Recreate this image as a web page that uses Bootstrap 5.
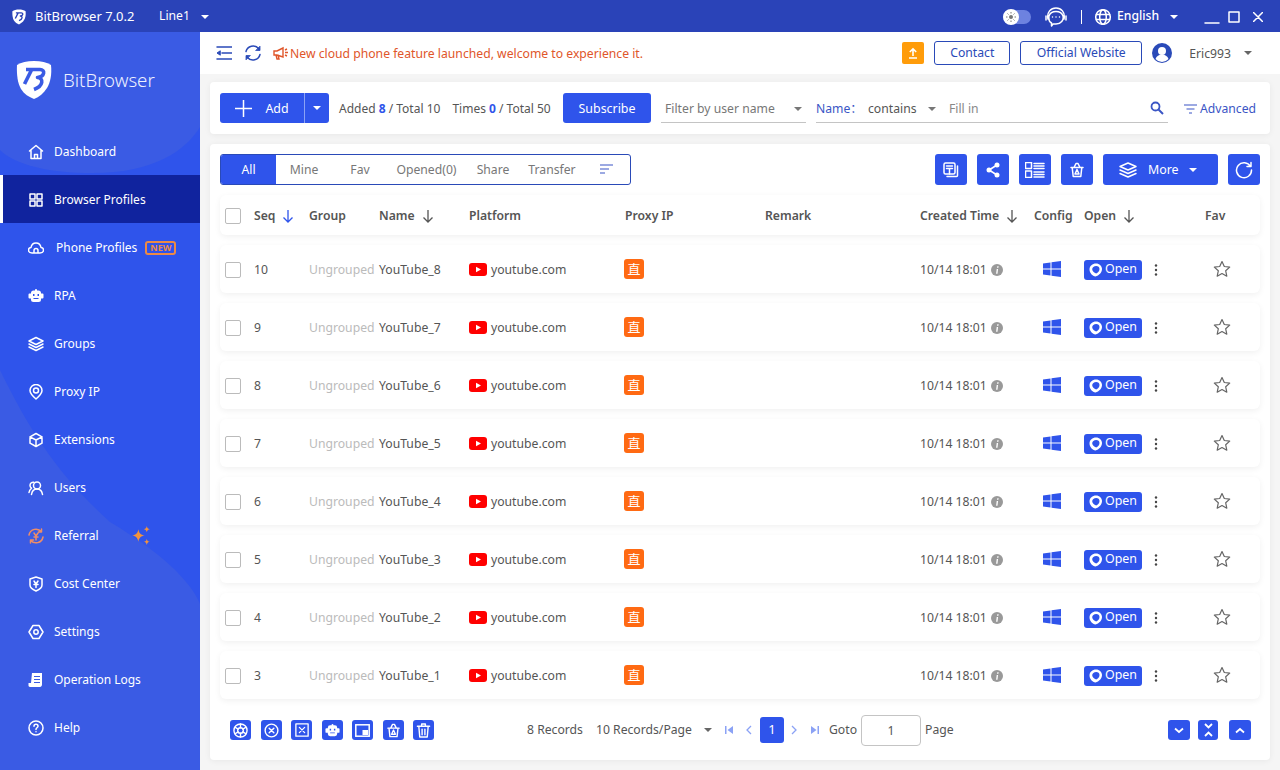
<!DOCTYPE html>
<html lang="en">
<head>
    <meta charset="UTF-8">
    <meta name="viewport" content="width=device-width, initial-scale=1.0">
    <title>BitBrowser</title>
    <link href="https://cdn.jsdelivr.net/npm/bootstrap@5.3.0/dist/css/bootstrap.min.css" rel="stylesheet">
    <style>
        html, body { height: 100%; overflow: hidden; }
        body {
            font-family: "Noto Sans", "Noto Sans CJK SC", sans-serif;
            font-size: 12.2px;
            color: #555;
            background: #f5f5f5;
        }
        svg { display: block; flex: none; }
        .ico { fill: none; stroke: currentColor; stroke-width: 1.5; stroke-linecap: round; stroke-linejoin: round; }
        .ico-fill { fill: currentColor; }
        .caret-down { width: 0; height: 0; border-left: 4px solid transparent; border-right: 4px solid transparent; border-top: 4px solid currentColor; flex: none; }
        .caret-grey { color: #666; }

        /* left margins in px that the bootstrap spacer scale does not have */
        .sp-4 { margin-left: 4px; }
        .sp-5 { margin-left: 5px; }
        .sp-7 { margin-left: 7px; }
        .sp-8 { margin-left: 8px; }
        .sp-9 { margin-left: 9px; }
        .sp-10 { margin-left: 10px; }
        .sp-11 { margin-left: 11px; }
        .sp-12 { margin-left: 12px; }
        .sp-13 { margin-left: 13px; }
        .sp-26 { margin-left: 26px; }

        .top-bar { height: 32px; background: #2a43b8; color: #fff; flex: none; padding-top: 1px; }
        .top-logo { margin-left: 12px; --cut: #2a43b8; }
        .top-title { margin-left: 9px; font-size: 13px; width: 124px; }
        .top-line { width: 42px; }
        .theme-switch { width: 28px; height: 14px; border-radius: 7px; background: #6d82e0; position: relative; }
        .theme-knob { position: absolute; left: 0; top: -1px; width: 16px; height: 16px; border-radius: 50%; background: #fff; color: #777; padding: 3px; }
        .top-sep { width: 1px; height: 14px; background: #fff; margin: 0 13px; }
        .lang-name { margin-left: 6px; width: 53px; }
        .win-close { margin-left: 13px; margin-right: 17px; }

        .side-bar { width: 200px; background: #2f54eb; color: #fff; flex: none; position: relative; overflow: hidden; }
        .side-bg { position: absolute; left: 0; top: 0; }
        .side-logo { position: relative; height: 95px; padding-left: 16px; gap: 11px; font-size: 18.6px; font-weight: 300; color: #eef1ff; --cut: #3a5be4; }
        .side-item { position: relative; height: 48px; padding: 2px 0 0 28px; gap: 10px; color: #fff; font-size: 12px; text-decoration: none; }
        .side-item svg.nav-ico { width: 16px; height: 16px; }
        .side-item.active-item { background: #10239e; box-shadow: inset 3px 0 0 #fff; }
        .new-tag { border: 2px solid #ed8a45; border-radius: 3px; color: #ed8a45; font-size: 9px; font-weight: 700; line-height: 10px; padding: 0 3px; margin-left: -2px; }
        .nudge { margin-left: 2px; }
        .referral-ico { color: #ee8d67; }
        .spark-ico { margin-left: 22px; color: #f2933d; }

        .main-pane { min-width: 0; }
        .head-bar { height: 42px; background: #fff; padding: 0 28px 0 16px; flex: none; color: #2a4ab8; }
        .mega-ico { margin-left: 11px; color: #e0562a; }
        .notice { color: #e0562a; margin-left: 1px; padding-top: 2px; }
        .btn-up { width: 22px; height: 22px; border-radius: 2px; background: #ff9c0a; color: #fff; }
        .btn-line { height: 24px; border: 1px solid #2a4ab8; border-radius: 3px; color: #2a4ab8; background: #fff; font-size: 12.2px; padding: 0; margin-left: 10px; }
        .w-contact { width: 76px; }
        .w-site { width: 122px; }
        .user-name { color: #555; margin: 2px 13px 0 17px; }

        .panel { background: #fff; border-radius: 4px; box-shadow: 0 1px 6px rgba(0, 0, 0, .06); margin: 0 10px; }
        .tool-panel { height: 52px; margin-top: 8px; padding: 0 13px 0 10px; flex: none; }
        .btn-blue { background: #2f54eb; border: 0; border-radius: 3px; color: #fff; font-size: 12.4px; padding: 0; }
        .btn-blue:hover { background: #2f54eb; color: #fff; }
        .add-main { width: 84px; height: 30px; gap: 13px; border-radius: 3px 0 0 3px; padding-top: 2px; }
        .add-main svg { margin-top: -2px; }
        .add-drop { width: 25px; height: 30px; border-radius: 0 3px 3px 0; border-left: 1px solid #8ba2f5; }
        .count-text { margin-left: 10px; width: 214px; gap: 12px; font-size: 12px; white-space: nowrap; padding-top: 2px; }
        .count-text b { color: #2f54eb; }
        .sub-btn { width: 88px; height: 30px; margin-left: 10px; padding-top: 2px; }
        .under-field { height: 30px; border-bottom: 1px solid #c4c4c4; color: #777; padding-top: 3px; }
        .filter-user { width: 145px; margin-left: 10px; padding-left: 4px; padding-right: 4px; }
        .filter-name { width: 352px; margin-left: 10px; }
        .name-label { color: #3a55c5; width: 52px; }
        .op-name { color: #555; width: 60px; }
        .fill-hint { margin-left: 13px; color: #888; }
        .search-ico { color: #3a55c5; margin-top: -2px; }
        .adv-link { color: #3a55c5; margin-left: 16px; gap: 3px; padding-top: 2px; }

        .list-panel { margin-top: 10px; margin-bottom: 10px; padding: 10px 10px 5px; min-height: 0; }
        .tab-group { width: 411px; height: 31px; border: 1px solid #2a4ab8; border-radius: 3px; overflow: hidden; color: #777; }
        .tab-cell { text-align: center; padding-top: 2px; }
        .tab-cell.on { background: #2f54eb; color: #fff; }
        .tab-sort { margin-left: 17px; color: #3a55c5; }
        .act-group { gap: 10px; }
        .act-btn { width: 32px; height: 31px; }
        .act-more { width: 115px; height: 31px; gap: 10px; padding: 1px 0 0 15px; }

        .grid-row {
            display: grid;
            grid-template-columns: 28px 55px 70px 90px 156px 140px 155px 114px 50px 121px 1fr;
            align-items: center;
            padding: 2px 0 0 6px;
            background: #fff;
            border-radius: 6px;
            box-shadow: 0 2px 6px rgba(0, 0, 0, .06);
        }
        .grid-head { height: 40px; margin-top: 10px; font-weight: 600; color: #555; }
        .grid-body { height: 48px; margin-top: 10px; }
        .grid-row .form-check-input { width: 16px; height: 16px; margin: 0 0 0 -1px; border: 1px solid #bbb; border-radius: 2px; }
        .muted-cell { color: #bbb; }
        .sort-cell { gap: 7px; }
        .sort-on { color: #2f54eb; }
        .direct-tag { width: 20px; height: 20px; margin: 0 0 2px -1px; border-radius: 3px; background: #ff6a13; color: #fff; font-size: 13px; line-height: 20px; text-align: center; }
        .open-cell { margin-bottom: 1px; }
        .open-btn { width: 58px; height: 20px; gap: 2px; }
        .win-ico { color: #2f54eb; margin: 0 0 2px 9px; }
        .kebab-ico { margin-left: 12px; color: #444; }
        .fav-ico { margin: 0 0 2px 8px; color: #666; }

        .foot-bar { margin-top: auto; height: 50px; flex: none; }
        .foot-icons { width: 307px; padding-left: 10px; }
        .foot-btn { width: 21px; height: 20px; margin-right: 9.5px; }
        .foot-side { width: 22px; height: 20px; }
        .foot-mid { width: 20px; margin-right: 3px; }
        .foot-right { gap: 8px; margin-right: 9px; }
        .page-num { width: 24px; height: 26px; font-size: 13px; margin-left: 8px; }
        .page-arrow { color: #8ba2f5; }
        .goto-input { width: 60px; height: 31px; margin-left: 4px; border: 1px solid #c4c4c4; border-radius: 4px; text-align: center; font-size: 12.2px; color: #555; padding: 0; }
    </style>
</head>
<body class="d-flex flex-column">
    <svg width="0" height="0" class="position-absolute">
        <symbol id="i-shield" viewBox="0 0 36 40">
            <path fill="currentColor" d="M18 1C11 1 5 2.500 1 5c-.5 9 .5 18 4 24 3 5 8 8 13 10 5-2 10-6 13-11 3.500-6 5-14 4-23C31 2.500 25 1 18 1z"/>
            <path fill="none" stroke="var(--cut)" stroke-width="3.600" stroke-linejoin="round" d="M10 9.500H24C29.500 9.500 29 16.500 21.500 17.500 28 18 27.500 26 18 29.500M15.500 10 8.500 24"/>
        </symbol>
        <symbol id="i-win" viewBox="0 0 18 16">
            <path fill="currentColor" d="M0 2.500 7.500 1.500V7.500H0zM8.500 1.300 18 0V7.500H8.500zM0 8.500H7.500V14.500L0 13.500zM8.500 8.500H18V16L8.500 14.700z"/>
        </symbol>
        <symbol id="i-yt" viewBox="0 0 18 13">
            <rect width="18" height="13" rx="3" fill="#f00"/><path fill="#fff" d="M7 3.700 12 6.500 7 9.300z"/>
        </symbol>
        <symbol id="i-arrow" viewBox="0 0 12 14">
            <path fill="none" stroke="currentColor" stroke-width="1.300" d="M6 1v12M1.500 8.500 6 13l4.500-4.500"/>
        </symbol>
        <symbol id="i-star" viewBox="0 0 18 18">
            <path fill="none" stroke="currentColor" stroke-width="1.200" stroke-linejoin="round" d="M9 1.500l2.300 5 5.400.6-4 3.700 1.100 5.400L9 13.500l-4.800 2.700 1.100-5.400-4-3.700 5.400-.6z"/>
        </symbol>
        <symbol id="i-info" viewBox="0 0 12 12">
            <circle cx="6" cy="6" r="6" fill="#999"/><path fill="#fff" d="M6.300 2.300h1.400l-.3 1.400H6zM5.700 5h1.400L6.500 9.700H5.100z"/>
        </symbol>
        <symbol id="i-open" viewBox="0 0 14 14">
            <path fill="#fff" fill-rule="evenodd" d="M7 .5C3.500.5.500 3 .5 6.500c0 3.500 3 6.500 6 7 3.500-1 6.500-4 6.500-7.500 0-3-2.500-5.500-6-5.500zM7.200 3c2 0 3.300 1.300 3.300 3 0 2-1.500 3.700-3.300 4.500C5 9.800 3.200 8 3.200 6.200 3.200 4.300 5 3 7.200 3z"/>
        </symbol>
        <symbol id="i-kebab" viewBox="0 0 4 12">
            <circle cx="2" cy="1.500" r="1.200" fill="currentColor"/><circle cx="2" cy="6" r="1.200" fill="currentColor"/><circle cx="2" cy="10.500" r="1.200" fill="currentColor"/>
        </symbol>
        <symbol id="i-bin" viewBox="0 0 16 16">
            <path class="ico" stroke-width="1.200" d="M2 5.500h12M3.200 5.500l1 9h7.600l1-9M5 5.500 7 1.500h2l2 4M8 7.500l-2 4.500h4z"/>
        </symbol>
        <symbol id="i-bot" viewBox="0 0 16 16">
            <path fill="currentColor" fill-rule="evenodd" d="M8 1a1 1 0 0 1 1 1v.5h1.500A2.500 2.500 0 0 1 13 5v.5h1.500a1 1 0 0 1 1 1v3a1 1 0 0 1-1 1H13v1A2.500 2.500 0 0 1 10.500 14h-5A2.500 2.500 0 0 1 3 11.500v-1H1.500a1 1 0 0 1-1-1v-3a1 1 0 0 1 1-1H3V5a2.500 2.500 0 0 1 2.500-2.500H7V2a1 1 0 0 1 1-1zM5 6v2h1.500V6zm4.500 0v2H11V6zM5.500 10v1h5v-1z"/>
        </symbol>
    </svg>

    <div class="top-bar d-flex align-items-center">
        <svg width="14" height="16" class="top-logo text-white"><use href="#i-shield"/></svg>
        <span class="top-title">BitBrowser 7.0.2</span>
        <span class="top-line">Line1</span>
        <span class="caret-down"></span>
        <div class="d-flex align-items-center ms-auto">
            <span class="theme-switch">
                <span class="theme-knob d-block"><svg viewBox="0 0 10 10" width="10" height="10"><circle cx="5" cy="5" r="2" fill="currentColor"/><path stroke="currentColor" d="M5 0v1.500M5 8.500V10M0 5h1.500M8.500 5H10M1.500 1.500l1 1M7.500 7.500l1 1M1.500 8.500l1-1M7.500 2.500l1-1"/></svg></span>
            </span>
            <svg class="ico sp-13" width="24" height="20" viewBox="0 0 24 20" stroke-width="1.200">
                <path d="M4 12C2.500 5 7 1 12 1s9.500 4 8 11M5 9c2-6 12-6 14 0 1 4-2 8-7 8H9l-1.500 2V16C5.500 15 4.500 12 5 9z"/>
                <path d="M2 9v4M22 9v4M8.500 10h.01M12 10h.01M15.500 10h.01"/>
            </svg>
            <span class="top-sep"></span>
            <svg class="ico" width="16" height="16" viewBox="0 0 16 16" stroke-width="1"><circle cx="8" cy="8" r="7.300"/><ellipse cx="8" cy="8" rx="3.300" ry="7.300"/><path d="M1.300 5.500h13.400M1.300 10.500h13.400"/></svg>
            <span class="lang-name fw-medium">English</span>
            <span class="caret-down"></span>
            <svg class="ico sp-26" width="16" height="16" viewBox="0 0 16 16"><path d="M1 14h14"/></svg>
            <svg class="ico sp-8" width="12" height="12" viewBox="0 0 12 12" stroke-width="2"><rect x="1" y="1" width="10" height="10"/></svg>
            <svg class="ico win-close" width="10" height="10" viewBox="0 0 10 10" stroke-width="1.800"><path d="M.5.500l9 9M9.500.500l-9 9"/></svg>
        </div>
    </div>

    <div class="d-flex flex-grow-1 overflow-hidden">
        <nav class="side-bar">
            <svg class="side-bg" width="200" height="738" viewBox="0 0 200 738">
                <path fill="#3a5be4" d="M0 0H200V95C185 120 150 143 85 141 40 140 12 130 0 118z"/>
                <path fill="#3a5be4" d="M0 338C30 400 60 445 110 490 160 520 190 548 200 572V738H0z"/>
            </svg>
            <div class="side-logo d-flex align-items-center">
                <svg width="36" height="40" class="text-white"><use href="#i-shield"/></svg>
                <span>BitBrowser</span>
            </div>
            <a class="side-item d-flex align-items-center" href="#">
                <svg class="nav-ico ico" viewBox="0 0 16 16" stroke-width="1.100"><path d="M1.500 7 8 1.500 14.500 7M3 6v8.500h10V6M6.500 14.500v-4h3v4"/></svg>Dashboard
            </a>
            <a class="side-item active-item d-flex align-items-center" href="#">
                <svg class="nav-ico ico" viewBox="0 0 16 16" stroke-width="1.300"><rect x="2" y="2" width="5" height="5"/><rect x="9" y="2" width="5" height="5"/><rect x="2" y="9" width="5" height="5"/><rect x="9" y="9" width="5" height="5"/></svg>Browser Profiles
            </a>
            <a class="side-item d-flex align-items-center" href="#">
                <svg class="nav-ico ico" viewBox="0 0 16 16" stroke-width="1.100"><path d="M4 13C1.500 13 .5 11.500.5 10S2 7.500 3 7.500C3.500 4.500 5.500 3 8 3s4.500 1.500 5 4.500c1 0 2.500 1 2.500 2.500S14.500 13 12 13zM6 13v-2.500a2 2 0 0 1 4 0V13"/></svg>
                <span class="nudge">Phone Profiles</span>
                <span class="new-tag">NEW</span>
            </a>
            <a class="side-item d-flex align-items-center" href="#">
                <svg class="nav-ico"><use href="#i-bot"/></svg>RPA
            </a>
            <a class="side-item d-flex align-items-center" href="#">
                <svg class="nav-ico ico" viewBox="0 0 16 16" stroke-width="1.100"><path d="M8 1.500 15 5 8 8.500 1 5zM1 8l7 3.500L15 8M1 11l7 3.500 7-3.500"/></svg>Groups
            </a>
            <a class="side-item d-flex align-items-center" href="#">
                <svg class="nav-ico ico" viewBox="0 0 16 16" stroke-width="1.100"><path d="M8 15C4 11.500 2 9 2 6.500a6 6 0 0 1 12 0C14 9 12 11.500 8 15z"/><circle cx="8" cy="6.500" r="2.500"/></svg>Proxy IP
            </a>
            <a class="side-item d-flex align-items-center" href="#">
                <svg class="nav-ico ico" viewBox="0 0 16 16" stroke-width="1.100"><path d="M8 1.500l6 3.300v6.400l-6 3.300-6-3.300V4.800zM2 4.800 8 8l6-3.200M8 8v6.500"/></svg>Extensions
            </a>
            <a class="side-item d-flex align-items-center" href="#">
                <svg class="nav-ico ico" viewBox="0 0 16 16" stroke-width="1.100"><circle cx="9" cy="5.500" r="3.500"/><path d="M3.500 14.500C4 11 6 9 9 9s5 2 5.500 5.500M5.800 2.200C3.500 2 2 3.500 2 5.500c0 1 .5 2 1.500 2.700C2 9.500 1.200 11 1 12.500"/></svg>Users
            </a>
            <a class="side-item d-flex align-items-center" href="#">
                <svg class="nav-ico ico referral-ico" viewBox="0 0 16 16" stroke-width="1.200"><path d="M1 7a7 7 0 0 1 12.500-3M15 9a7 7 0 0 1-12.500 3M13.500 1v3h-3M2.500 15v-3h3M6 5l2 3 2-3M8 8v4M6 9h4"/></svg>Referral
                <svg class="spark-ico" width="20" height="20" viewBox="0 0 19 19"><path fill="currentColor" d="M7 3c.6 3.500 2 5.300 6 6-4 .7-5.400 2.500-6 6-.6-3.500-2-5.300-6-6 4-.7 5.400-2.500 6-6zM15 0c.3 1.800 1 2.700 3 3-2 .3-2.700 1.200-3 3-.3-1.800-1-2.700-3-3 2-.3 2.700-1.200 3-3zM15 12c.3 1.800 1 2.700 3 3-2 .3-2.700 1.200-3 3-.3-1.800-1-2.700-3-3 2-.3 2.700-1.200 3-3z"/></svg>
            </a>
            <a class="side-item d-flex align-items-center" href="#">
                <svg class="nav-ico ico" viewBox="0 0 16 16" stroke-width="1.200"><path d="M8 1l6 2v6c0 2.500-2.500 4.500-6 6-3.500-1.500-6-3.500-6-6V3zM6 5l2 3 2-3M8 8v3.500M6 8.500h4"/></svg>Cost Center
            </a>
            <a class="side-item d-flex align-items-center" href="#">
                <svg class="nav-ico ico" viewBox="0 0 16 16" stroke-width="1.300"><path d="M5 1.500h6L15 8l-4 6.500H5L1 8z"/><circle cx="8" cy="8" r="2.200"/></svg>Settings
            </a>
            <a class="side-item d-flex align-items-center" href="#">
                <svg class="nav-ico" viewBox="0 0 16 16"><path fill="currentColor" fill-rule="evenodd" d="M4 1h10v11.500c0 1.500-1 2.500-2 2.500H2c-1 0-1.500-.8-1.500-1.500V11H3zM6 4v1h6V4zM6 7v1h6V7zM6 10v1h6v-1z"/></svg>Operation Logs
            </a>
            <a class="side-item d-flex align-items-center" href="#">
                <svg class="nav-ico ico" viewBox="0 0 16 16" stroke-width="1.200"><circle cx="8" cy="8" r="7"/><path d="M6 6.300C6 5 7 4.300 8 4.300s2 .7 2 1.900c0 1.500-2 1.700-2 3.200M8 11.700h.01"/></svg>Help
            </a>
        </nav>

        <main class="main-pane flex-grow-1 d-flex flex-column">
            <div class="head-bar d-flex align-items-center">
                <svg class="ico" width="16" height="14" viewBox="0 0 16 14" stroke-width="1.500"><path d="M1 1h15M6 7h10M1 13h15"/><path class="ico-fill" stroke-width="1" d="M4 5 1 7l3 2z"/></svg>
                <svg class="ico sp-12" width="18" height="18" viewBox="0 0 18 18"><path d="M2 7.500A7.200 7.200 0 0 1 14.500 4.500M16 10.500A7.200 7.200 0 0 1 3.500 13.500"/><path class="ico-fill" stroke-width=".8" d="M16 2.500v4h-4zM2 15.500v-4h4z"/></svg>
                <svg class="mega-ico" width="16" height="14" viewBox="0 0 16 14"><path fill="none" stroke="currentColor" stroke-width="1.400" d="M1 5h3l6-3v9L4 9H1zM3 9l1 4h2l-1-4M12 4l2-1M12 6.500h3M12 9l2 1"/></svg>
                <span class="notice">New cloud phone feature launched, welcome to experience it.</span>
                <div class="d-flex align-items-center ms-auto">
                    <span class="btn-up d-flex align-items-center justify-content-center">
                        <svg width="10" height="12" viewBox="0 0 10 12"><path fill="none" stroke="#fff" stroke-width="1.600" d="M5 9V2M1.800 5 5 1.800 8.200 5M1 11h8"/></svg>
                    </span>
                    <button class="btn btn-line w-contact">Contact</button>
                    <button class="btn btn-line w-site">Official Website</button>
                    <svg class="sp-10" width="20" height="20" viewBox="0 0 20 20"><circle cx="10" cy="10" r="10" fill="#2a4ab8"/><circle cx="10" cy="8" r="4" fill="#fff"/><path fill="#fff" d="M3.500 16c1-3 3.500-4.500 6.500-4.500s5.500 1.500 6.500 4.500A9 9 0 0 1 10 19a9 9 0 0 1-6.500-3z"/></svg>
                    <span class="user-name">Eric993</span>
                    <span class="caret-down caret-grey"></span>
                </div>
            </div>

            <div class="panel tool-panel d-flex align-items-center">
                <button class="btn btn-blue add-main d-flex align-items-center justify-content-center">
                    <svg width="17" height="17" viewBox="0 0 17 17"><path stroke="#fff" stroke-width="1.500" d="M8.500 0v17M0 8.500h17"/></svg>Add
                </button>
                <button class="btn btn-blue add-drop d-flex align-items-center justify-content-center"><span class="caret-down"></span></button>
                <div class="count-text d-flex">
                    <span>Added <b>8</b> / Total 10</span>
                    <span>Times <b>0</b> / Total 50</span>
                </div>
                <button class="btn btn-blue sub-btn">Subscribe</button>
                <div class="under-field filter-user d-flex align-items-center justify-content-between">
                    <span>Filter by user name</span><span class="caret-down"></span>
                </div>
                <div class="under-field filter-name d-flex align-items-center">
                    <span class="name-label">Name：</span>
                    <span class="op-name">contains</span>
                    <span class="caret-down"></span>
                    <span class="fill-hint">Fill in</span>
                    <svg class="search-ico ms-auto me-1" width="14" height="14" viewBox="0 0 14 14"><circle cx="5.500" cy="5.500" r="4" fill="none" stroke="currentColor" stroke-width="1.800"/><path stroke="currentColor" stroke-width="2" d="M8.500 8.500 13 13"/></svg>
                </div>
                <span class="adv-link d-flex align-items-center">
                    <svg width="13" height="10" viewBox="0 0 13 10"><path stroke="currentColor" stroke-width="1.200" d="M0 1h13M2.500 5h8M5 9h3"/></svg>Advanced
                </span>
            </div>

            <div class="panel list-panel flex-grow-1 d-flex flex-column">
                <div class="d-flex align-items-center">
                    <div class="tab-group d-flex align-items-center" id="tabs"></div>
                    <div class="act-group d-flex ms-auto">
                        <button class="btn btn-blue act-btn d-flex align-items-center justify-content-center">
                            <svg class="ico" width="16" height="16" viewBox="0 0 16 16" stroke-width="1.300"><rect x="1" y="1" width="11" height="11" rx="1.500"/><path d="M3.500 6.500h6M6.500 6.500V12M3.500 4h6M14.500 4v9.500a1 1 0 0 1-1 1H4"/></svg>
                        </button>
                        <button class="btn btn-blue act-btn d-flex align-items-center justify-content-center">
                            <svg width="14" height="16" viewBox="0 0 14 16"><path stroke="#fff" stroke-width="1.600" fill="none" d="M11 3 3 8l8 5"/><circle cx="11" cy="3" r="2.500" fill="#fff"/><circle cx="3" cy="8" r="2.500" fill="#fff"/><circle cx="11" cy="13" r="2.500" fill="#fff"/></svg>
                        </button>
                        <button class="btn btn-blue act-btn d-flex align-items-center justify-content-center">
                            <svg class="ico" width="20" height="16" viewBox="0 0 20 16" stroke-width="1"><rect x=".5" y=".5" width="6" height="6"/><rect x=".5" y="9" width="6" height="6.500"/><path d="M9 1.500h10M9 4h10M9 6.500h10M9 10h10M9 12.500h10M9 15h10"/></svg>
                        </button>
                        <button class="btn btn-blue act-btn d-flex align-items-center justify-content-center">
                            <svg width="16" height="16"><use href="#i-bin"/></svg>
                        </button>
                        <button class="btn btn-blue act-more d-flex align-items-center">
                            <svg class="ico" width="20" height="16" viewBox="0 0 20 16" stroke-width="1.500"><path d="M10 1l8 3.500L10 8 2 4.500zM2 8l8 3.500L18 8M2 11.500 10 15l8-3.500"/></svg>
                            <span>More</span><span class="caret-down"></span>
                        </button>
                        <button class="btn btn-blue act-btn d-flex align-items-center justify-content-center">
                            <svg class="ico" width="18" height="18" viewBox="0 0 18 18" stroke-width="1.500"><path d="M15.500 5.500A7.500 7.500 0 1 0 16.500 9M16 1.500v4h-4"/></svg>
                        </button>
                    </div>
                </div>

                <div class="grid-row grid-head">
                    <input class="form-check-input" type="checkbox" aria-label="Select all">
                    <span class="d-flex align-items-center sort-cell">Seq <svg class="sort-on" width="12" height="14"><use href="#i-arrow"/></svg></span>
                    <span>Group</span>
                    <span class="d-flex align-items-center sort-cell">Name <svg width="12" height="14"><use href="#i-arrow"/></svg></span>
                    <span>Platform</span>
                    <span>Proxy IP</span>
                    <span>Remark</span>
                    <span class="d-flex align-items-center sort-cell">Created Time <svg width="12" height="14"><use href="#i-arrow"/></svg></span>
                    <span>Config</span>
                    <span class="d-flex align-items-center sort-cell">Open <svg width="12" height="14"><use href="#i-arrow"/></svg></span>
                    <span>Fav</span>
                </div>
                <div id="rows"></div>

                <div class="foot-bar d-flex align-items-center">
                    <div class="foot-icons d-flex">
                        <button class="btn btn-blue foot-btn d-flex align-items-center justify-content-center">
                            <svg class="ico" width="15" height="15" viewBox="0 0 16 16" stroke-width="1"><circle cx="8" cy="8" r="7"/><circle cx="8" cy="8" r="3"/><path d="M8 1v4M14 4.500l-3.500 2M14 11.500l-3.500-2M8 15v-4M2 11.500l3.500-2M2 4.500l3.500 2"/></svg>
                        </button>
                        <button class="btn btn-blue foot-btn d-flex align-items-center justify-content-center">
                            <svg class="ico" width="15" height="15" viewBox="0 0 16 16" stroke-width="1.800"><circle cx="8" cy="8" r="6.800"/><path d="M5.500 5.500l5 5M10.500 5.500l-5 5"/></svg>
                        </button>
                        <button class="btn btn-blue foot-btn d-flex align-items-center justify-content-center">
                            <svg class="ico" width="14" height="14" viewBox="0 0 16 16" stroke-width="1.800"><rect x="1" y="1" width="14" height="14"/><path d="M5 5l6 6M11 5l-6 6"/></svg>
                        </button>
                        <button class="btn btn-blue foot-btn d-flex align-items-center justify-content-center">
                            <svg width="15" height="15"><use href="#i-bot"/></svg>
                        </button>
                        <button class="btn btn-blue foot-btn d-flex align-items-center justify-content-center">
                            <svg width="15" height="13" viewBox="0 0 15 13"><rect x=".8" y=".8" width="13.400" height="11.400" fill="none" stroke="#fff" stroke-width="1.500"/><rect x="7.500" y="6" width="5.500" height="5" fill="#fff"/></svg>
                        </button>
                        <button class="btn btn-blue foot-btn d-flex align-items-center justify-content-center">
                            <svg width="15" height="15"><use href="#i-bin"/></svg>
                        </button>
                        <button class="btn btn-blue foot-btn d-flex align-items-center justify-content-center">
                            <svg class="ico" width="15" height="15" viewBox="0 0 16 16" stroke-width="1.200"><path d="M1.500 3.500h13M3 3.500l1 11.500h8l1-11.500M6 3.500V1h4v2.500M6.500 6.500v6M9.500 6.500v6"/></svg>
                        </button>
                    </div>
                    <span>8 Records</span>
                    <span class="sp-13">10 Records/Page</span>
                    <span class="caret-down caret-grey sp-12"></span>
                    <span class="page-arrow d-flex align-items-center sp-12">
                        <svg width="10" height="10" viewBox="0 0 10 10"><path fill="currentColor" d="M1 1h1.500v8H1zM9 1v8L3.500 5z"/></svg>
                        <svg class="sp-11" width="7" height="10" viewBox="0 0 7 10"><path fill="none" stroke="currentColor" stroke-width="1.300" d="M6 1 2 5l4 4"/></svg>
                    </span>
                    <button class="btn btn-blue page-num">1</button>
                    <span class="page-arrow d-flex align-items-center sp-7">
                        <svg width="7" height="10" viewBox="0 0 7 10"><path fill="none" stroke="currentColor" stroke-width="1.300" d="M1 1l4 4-4 4"/></svg>
                        <svg class="sp-12" width="10" height="10" viewBox="0 0 10 10"><path fill="currentColor" d="M1 1v8l5.500-4zM7.500 1H9v8H7.500z"/></svg>
                    </span>
                    <span class="sp-9">Goto</span>
                    <input class="goto-input" type="text" value="1" aria-label="Page number">
                    <span class="sp-4">Page</span>
                    <div class="foot-right d-flex ms-auto">
                        <button class="btn btn-blue foot-side d-flex align-items-center justify-content-center">
                            <svg width="10" height="7" viewBox="0 0 10 7"><path fill="none" stroke="#fff" stroke-width="1.800" d="M1 1.500 5 5l4-3.500"/></svg>
                        </button>
                        <button class="btn btn-blue foot-side foot-mid d-flex align-items-center justify-content-center">
                            <svg width="9" height="14" viewBox="0 0 9 14"><path fill="none" stroke="#fff" stroke-width="1.800" d="M1 1l3.500 3.500L8 1M1 13l3.500-3.500L8 13"/></svg>
                        </button>
                        <button class="btn btn-blue foot-side d-flex align-items-center justify-content-center">
                            <svg width="10" height="7" viewBox="0 0 10 7"><path fill="none" stroke="#fff" stroke-width="1.800" d="M1 5.500 5 2l4 3.500"/></svg>
                        </button>
                    </div>
                </div>
            </div>
        </main>
    </div>

    <script src="https://cdn.jsdelivr.net/npm/bootstrap@5.3.0/dist/js/bootstrap.bundle.min.js"></script>
    <script>
        // tabs: label and width
        const tabs = [['All', 55], ['Mine', 56], ['Fav', 56], ['Opened(0)', 77], ['Share', 56], ['Transfer', 62]];
        document.getElementById('tabs').innerHTML = tabs.map((t, i) =>
            `<span class="tab-cell h-100 d-flex align-items-center justify-content-center ${i === 0 ? 'on' : ''}" style="width:${t[1]}px">${t[0]}</span>`
        ).join('') + `<svg class="tab-sort" width="13" height="11" viewBox="0 0 13 11"><path stroke="currentColor" stroke-width="1.200" d="M0 1h13M0 5h9M0 9h5"/></svg>`;

        // profile rows
        const rows = [[10, 8], [9, 7], [8, 6], [7, 5], [6, 4], [5, 3], [4, 2], [3, 1]];
        document.getElementById('rows').innerHTML = rows.map(r => `
            <div class="grid-row grid-body">
                <input class="form-check-input" type="checkbox" aria-label="Select row">
                <span>${r[0]}</span>
                <span class="muted-cell">Ungrouped</span>
                <span>YouTube_${r[1]}</span>
                <span class="d-flex align-items-center gap-1"><svg width="18" height="13"><use href="#i-yt"/></svg>youtube.com</span>
                <span class="direct-tag">直</span>
                <span></span>
                <span class="d-flex align-items-center gap-1">10/14 18:01 <svg width="12" height="12"><use href="#i-info"/></svg></span>
                <svg class="win-ico" width="18" height="16"><use href="#i-win"/></svg>
                <span class="open-cell d-flex align-items-center">
                    <button class="btn btn-blue open-btn d-flex align-items-center justify-content-center"><svg width="14" height="14"><use href="#i-open"/></svg>Open</button>
                    <svg class="kebab-ico" width="4" height="12"><use href="#i-kebab"/></svg>
                </span>
                <svg class="fav-ico" width="18" height="18"><use href="#i-star"/></svg>
            </div>`).join('');
    </script>
</body>
</html>
